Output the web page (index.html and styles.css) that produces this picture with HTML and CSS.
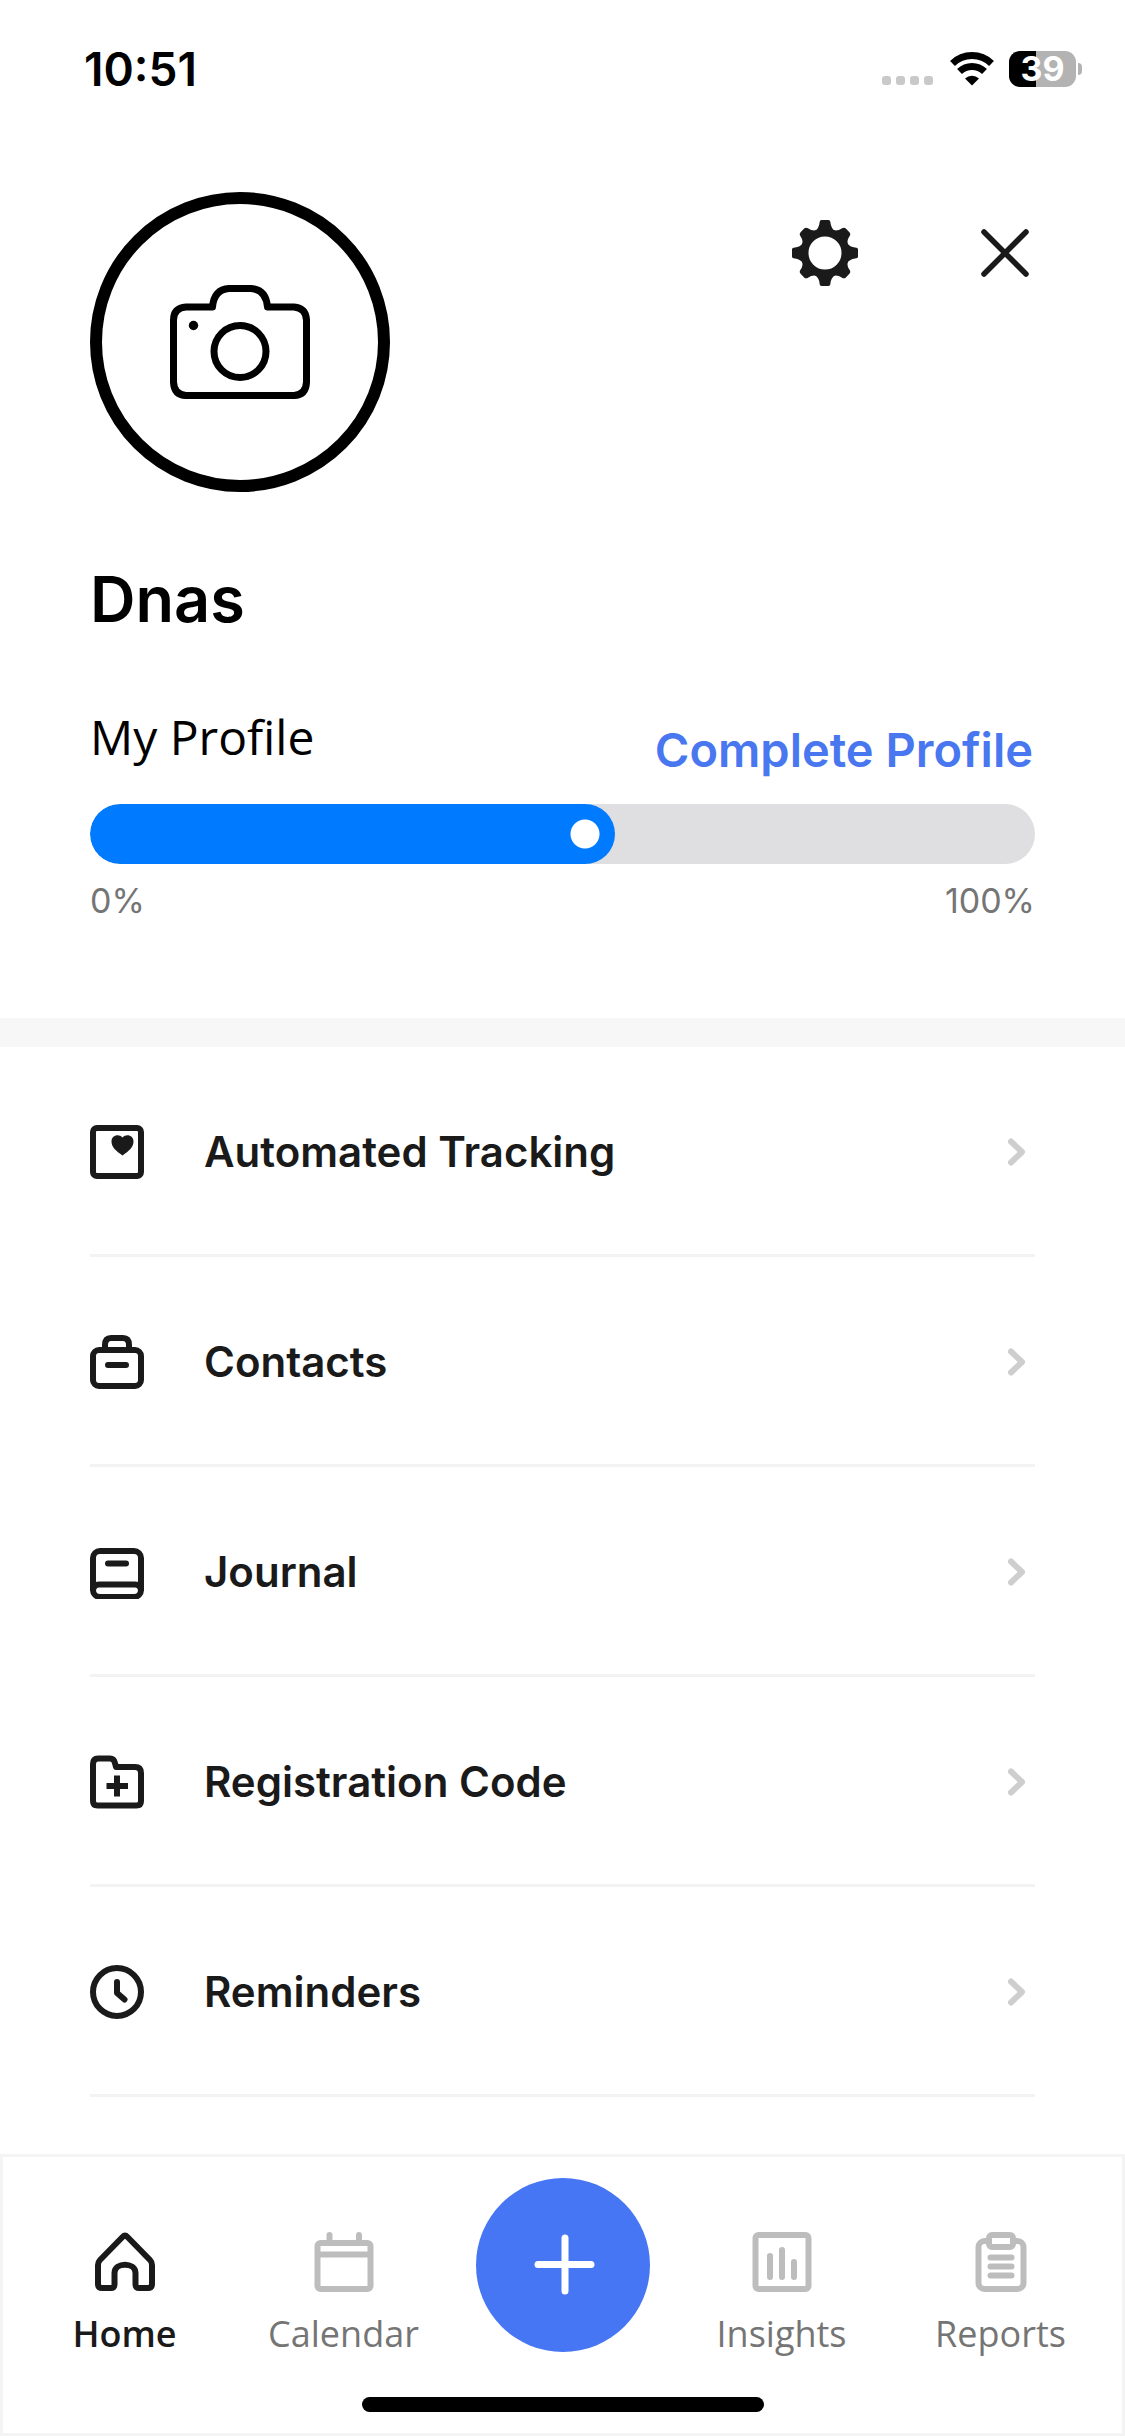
FILE: index.html
```html
<!DOCTYPE html>
<html lang="en">
<head>
<meta charset="utf-8">
<meta name="viewport" content="width=device-width, initial-scale=1">
<title>Profile</title>
<link rel="stylesheet" href="styles.css">
</head>
<body>
<div class="status">
  <span class="clock">10:51</span>
  <div class="indicators">
    <svg width="54" height="36" viewBox="0 0 54 36" fill="#c9c9c9" aria-hidden="true">
      <rect x="1" y="25" width="9" height="9" rx="3"/><rect x="15" y="25" width="9" height="9" rx="3"/><rect x="29" y="25" width="9" height="9" rx="3"/><rect x="43" y="25" width="9" height="9" rx="3"/>
    </svg>
    <svg width="46" height="36" viewBox="0 0 46 36" aria-hidden="true">
      <path d="M3.5 12.500A28 28 0 0 1 42.500 12.500" fill="none" stroke="#000" stroke-width="7"/>
      <path d="M10.500 20.500A18 18 0 0 1 35.500 20.500" fill="none" stroke="#000" stroke-width="7"/>
      <path d="M16 27.500A10.500 10.500 0 0 1 30 27.500L23 34.500Z"/>
    </svg>
    <div class="battery"><span class="level">39</span></div>
  </div>
</div>

<main>
  <section class="profile">
    <div class="top">
      <button class="avatar" aria-label="Add photo">
        <svg width="140" height="114" viewBox="0 0 140 114" fill="none" stroke="#000" stroke-width="7" stroke-linecap="round" stroke-linejoin="round" aria-hidden="true">
          <path d="M42.500 22H16Q3.500 23 3.500 35V97Q4 110 16 110.500H124Q136 110 136.500 97V35Q136 23 124 22H97.500Q96 4.500 81 3.500H59Q44 4.500 42.500 22Z"/>
          <circle cx="70" cy="66.500" r="26"/>
          <circle cx="23.500" cy="40.500" r="4.700" fill="#000" stroke="none"/>
        </svg>
      </button>
      <div class="actions">
        <button class="icon-button" aria-label="Settings">
          <svg width="66" height="66" viewBox="-33 -33 66 66" fill="#1a1a1a" aria-hidden="true">
            <defs>
              <path id="tooth" d="M-10 -22Q-6 -25 -5.500 -30Q-5.300 -33 -3.500 -33H3.500Q5.300 -33 5.500 -30Q6 -25 10 -22Z"/>
              <path id="short-tooth" d="M-10 -22Q-6 -25 -5.500 -29Q-5 -32 -2.500 -32H2.500Q5 -32 5.500 -29Q6 -25 10 -22Z"/>
            </defs>
            <circle r="20.500" fill="none" stroke="#1a1a1a" stroke-width="8"/>
            <use href="#tooth"/><use href="#short-tooth" transform="rotate(45)"/><use href="#tooth" transform="rotate(90)"/><use href="#short-tooth" transform="rotate(135)"/><use href="#tooth" transform="rotate(180)"/><use href="#short-tooth" transform="rotate(225)"/><use href="#tooth" transform="rotate(270)"/><use href="#short-tooth" transform="rotate(315)"/>
          </svg>
        </button>
        <button class="icon-button" aria-label="Close">
          <svg width="60" height="66" viewBox="0 0 60 66" fill="none" stroke="#1a1a1a" stroke-width="5.500" stroke-linecap="round" aria-hidden="true"><path d="M9 12L51 54M51 12L9 54"/></svg>
        </button>
      </div>
    </div>
    <h1>Dnas</h1>
    <div class="heading">
      <label class="my-profile" for="completion">My Profile</label>
      <a class="complete" href="#profile">Complete Profile</a>
    </div>
    <progress class="bar" id="completion" max="9" value="5"></progress>
    <div class="scale"><span>0%</span><span>100%</span></div>
  </section>

  <nav class="menu" aria-label="Menu">
    <a class="row" href="#tracking">
      <svg class="glyph" viewBox="0 0 54 54" aria-hidden="true"><rect x="3" y="3" width="48" height="48" rx="4"/><path d="M32.500 30.500C26 26 21.500 22 21.500 16.500C21.500 10 29 8.500 32.500 12.500C36 8.500 43.500 10 43.500 16.500C43.500 22 39 26 32.500 30.500Z" fill="#1a1a1a" stroke="none"/></svg>
      <span class="name">Automated Tracking</span>
      <svg class="chevron" viewBox="0 0 18 30" aria-hidden="true"><path d="M3 4.500L14 15L3 25.500"/></svg>
    </a>
    <a class="row" href="#contacts">
      <svg class="glyph" viewBox="0 0 54 54" aria-hidden="true"><rect x="3" y="15" width="48" height="36" rx="6"/><path d="M15 14V10Q15 3 21 3H33Q39 3 39 10V14M18 30H36"/></svg>
      <span class="name">Contacts</span>
      <svg class="chevron" viewBox="0 0 18 30" aria-hidden="true"><path d="M3 4.500L14 15L3 25.500"/></svg>
    </a>
    <a class="row" href="#journal">
      <svg class="glyph" viewBox="0 0 54 54" aria-hidden="true"><rect x="3" y="6" width="48" height="46" rx="7"/><path d="M18 18.500H36"/><path d="M3 46Q3 39.500 9 39.500H45Q51 39.500 51 46" stroke-linecap="butt"/></svg>
      <span class="name">Journal</span>
      <svg class="chevron" viewBox="0 0 18 30" aria-hidden="true"><path d="M3 4.500L14 15L3 25.500"/></svg>
    </a>
    <a class="row" href="#registration">
      <svg class="glyph" viewBox="0 0 54 54" aria-hidden="true"><path d="M8 3.500H20Q24 3.500 25 8L26 12H45Q51 12 51 18V46Q51 50.500 46.500 50.500H7.500Q3 50.500 3 46V9Q3 3.500 8 3.500Z"/><path d="M27 20.500V41.500M16.500 31H38" stroke-linecap="butt"/></svg>
      <span class="name">Registration Code</span>
      <svg class="chevron" viewBox="0 0 18 30" aria-hidden="true"><path d="M3 4.500L14 15L3 25.500"/></svg>
    </a>
    <a class="row" href="#reminders">
      <svg class="glyph" viewBox="0 0 54 54" aria-hidden="true"><circle cx="27" cy="27" r="24"/><path d="M27 17V28L34.500 34.500"/></svg>
      <span class="name">Reminders</span>
      <svg class="chevron" viewBox="0 0 18 30" aria-hidden="true"><path d="M3 4.500L14 15L3 25.500"/></svg>
    </a>
  </nav>
</main>

<footer class="tabbar">
  <nav class="tabs" aria-label="Main">
    <a class="tab current" href="#home" aria-current="page">
      <svg class="tab-icon" viewBox="0 0 60 60" aria-hidden="true"><path d="M27.500 5Q30 2.500 32.500 5L55 28Q57 30 57 33V52Q57 56 53 56H44Q40.500 56 40.500 52V41C40.500 30 19.500 30 19.500 41V52Q19.500 56 16 56H7Q3 56 3 52V33Q3 30 5 28Z"/></svg>
      <span>Home</span>
    </a>
    <a class="tab" href="#calendar">
      <svg class="tab-icon" viewBox="0 0 60 60" aria-hidden="true"><rect x="3.500" y="11" width="53" height="46" rx="3"/><path d="M15.500 3V9M45 3V9M4 22.500H56"/></svg>
      <span>Calendar</span>
    </a>
    <button class="add" aria-label="Add">
      <svg width="66" height="66" viewBox="0 0 66 66" fill="none" stroke="#fff" stroke-width="7" stroke-linecap="round" aria-hidden="true"><path d="M35 6V59M8 32.500H61"/></svg>
    </button>
    <a class="tab" href="#insights">
      <svg class="tab-icon" viewBox="0 0 60 60" aria-hidden="true"><rect x="3.500" y="3" width="53" height="54" rx="3"/><path d="M18 24V45M30 18V45M42 30V45"/></svg>
      <span>Insights</span>
    </a>
    <a class="tab" href="#reports">
      <svg class="tab-icon" viewBox="0 0 60 60" aria-hidden="true"><rect x="7.500" y="9" width="45" height="48" rx="6"/><rect x="18" y="3" width="24" height="12" rx="3" fill="#fff"/><path d="M19.500 25.500H40.500M19.500 34.500H40.500M19.500 43.500H40.500"/></svg>
      <span>Reports</span>
    </a>
  </nav>
  <div class="home-indicator"></div>
</footer>
</body>
</html>
```
FILE: styles.css
```css
* {
  box-sizing: border-box;
}

body {
  margin: 0;
  min-height: 100vh;
  display: flex;
  flex-direction: column;
  background: #fff;
  color: #1a1a1a;
  font-family: Inter, "Liberation Sans", sans-serif;
}

button {
  padding: 0;
  border: 0;
  background: none;
}

a {
  color: inherit;
  text-decoration: none;
}

svg {
  display: block;
  flex: none;
}

/* Status bar */
.status {
  display: flex;
  justify-content: space-between;
  align-items: center;
  height: 138px;
  padding: 0 44px 0 84px;
  color: #000;
}

.clock {
  font-size: 46px;
  font-weight: 600;
}

.indicators {
  display: flex;
  align-items: center;
  gap: 14px;
}

.battery {
  position: relative;
  width: 67px;
  height: 36px;
  margin-right: 5px;
  border-radius: 11px;
  background: linear-gradient(90deg, #000 40%, #b3b3b3 40%);
  color: #fff;
  text-align: center;
}

.battery::after {
  content: "";
  position: absolute;
  left: 69px;
  top: 12px;
  width: 4px;
  height: 12px;
  border-radius: 0 4px 4px 0;
  background: #b3b3b3;
}

.level {
  font-size: 34px;
  font-weight: 700;
  line-height: 36px;
}

/* Profile summary */
.profile {
  padding: 54px 90px 93px;
}

.top {
  display: flex;
  justify-content: space-between;
  align-items: flex-start;
}

.avatar {
  display: grid;
  place-items: center;
  width: 300px;
  height: 300px;
  border: 12px solid #000;
  border-radius: 50%;
}

.actions {
  display: flex;
  gap: 117px;
  padding-top: 28px;
}

h1 {
  margin: 67px 0 68px;
  color: #000;
  font-size: 63px;
  font-weight: 600;
  line-height: 80px;
}

.heading {
  display: flex;
  justify-content: space-between;
  line-height: 60px;
}

.my-profile {
  color: #000;
  font-family: "Open Sans", "Noto Sans", sans-serif;
  font-size: 48px;
}

.complete {
  padding: 13px 2px 0 0;
  color: #4877f0;
  font-size: 47px;
  font-weight: 600;
}

.bar {
  appearance: none;
  display: block;
  width: 100%;
  height: 60px;
  margin-top: 24px;
  border: 0;
  border-radius: 30px;
  background: #dfdfe1;
  overflow: hidden;
}

.bar::-webkit-progress-bar {
  background: #dfdfe1;
}

.bar::-webkit-progress-value {
  border-radius: 30px;
  background: radial-gradient(circle at calc(100% - 30px) 50%, #fff 14px, #007aff 15px);
}

.scale {
  display: flex;
  justify-content: space-between;
  margin-top: 13px;
  color: #757575;
  font-size: 34px;
  line-height: 48px;
}

/* Menu */
.menu {
  padding: 0 90px;
  border-top: 29px solid #f7f7f7;
}

.row {
  display: flex;
  align-items: center;
  height: 210px;
  padding: 3px 9px 0 0;
  border-bottom: 3px solid #f3f3f3;
}

.glyph {
  width: 54px;
  height: 54px;
  fill: none;
  stroke: #1a1a1a;
  stroke-width: 6;
  stroke-linecap: round;
  stroke-linejoin: round;
}

.name {
  flex: 1;
  margin-left: 60px;
  font-size: 42px;
  font-weight: 600;
  line-height: 50px;
}

.chevron {
  width: 18px;
  height: 30px;
  fill: none;
  stroke: #cecece;
  stroke-width: 6;
  stroke-linecap: round;
  stroke-linejoin: round;
}

/* Bottom tabs */
.tabbar {
  position: sticky;
  bottom: 0;
  margin-top: auto;
  padding: 21px 12px;
  border: 3px solid #f4f4f4;
  background: #fff;
}

.tabs {
  display: grid;
  grid-template-columns: repeat(5, 1fr);
}

.tab {
  display: flex;
  flex-direction: column;
  align-items: center;
  gap: 18px;
  padding-top: 54px;
  color: #757575;
  font-family: "Open Sans", "Noto Sans", sans-serif;
  font-size: 36px;
  line-height: 48px;
}

.current {
  color: #1a1a1a;
  font-weight: 600;
}

.tab-icon {
  width: 60px;
  height: 60px;
  fill: none;
  stroke: #bdbdbd;
  stroke-width: 6;
  stroke-linecap: round;
  stroke-linejoin: round;
}

.current .tab-icon {
  stroke: #1a1a1a;
}

.add {
  display: grid;
  place-items: center;
  justify-self: center;
  width: 174px;
  height: 174px;
  border-radius: 50%;
  background: #4676f4;
}

.home-indicator {
  width: 402px;
  height: 15px;
  margin: 39px auto 0;
  border-radius: 8px;
  background: #000;
}
```
